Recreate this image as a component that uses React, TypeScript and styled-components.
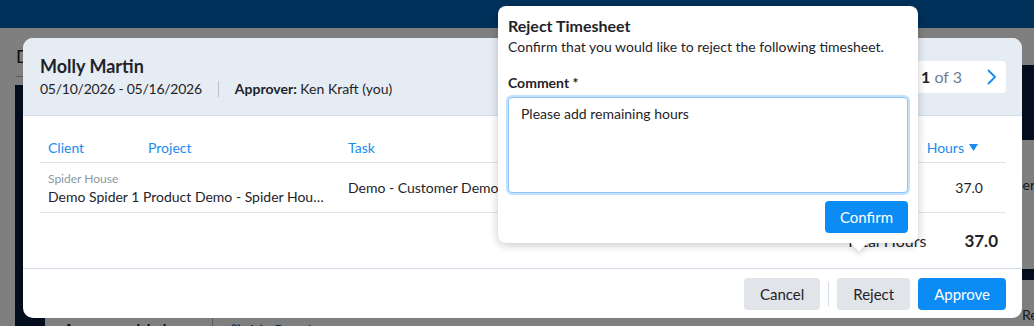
import { useEffect, useRef } from "react";
import styled, { createGlobalStyle } from "styled-components";
import { Users } from "lucide-react";

const GlobalStyle = createGlobalStyle`
  body {
    margin: 0;
    font-family: Lato, "Open Sans", Arial, sans-serif;
    color: #1f2329;
  }
  * {
    box-sizing: border-box;
  }
`;

const Screen = styled.div`
  position: relative;
  width: 1034px;
  height: 326px;
  overflow: hidden;
  background: #fff;
`;

// page under the modal backdrop
const TopBar = styled.div`
  height: 28px;
  background: #0062b6;
`;

const PageColumns = styled.div`
  display: flex;
  gap: 5px;
`;

const MainColumn = styled.div`
  flex: 1;
  padding-left: 15px;
`;

const PageTitle = styled.div`
  font-size: 18px;
  color: #222;
  line-height: 22px;
  margin: 17px 0 0 1px;
`;

const PageRule = styled.div`
  height: 1px;
  background: #bbb;
  margin: 9px 0 8px 1px;
`;

const DarkPanel = styled.div`
  height: 225px;
  background: #061a3a;
`;

const InboxBar = styled.div`
  display: flex;
  align-items: center;
  height: 40px;
  padding-left: 17px;
  border-left: 30px solid #061a3a;
`;

const InboxTitle = styled.div`
  font-size: 20px;
  color: #222;
  padding-right: 18px;
  margin-right: 16px;
  border-right: 1px solid #bbb;
`;

const InboxLink = styled.div`
  display: flex;
  align-items: center;
  gap: 6px;
  font-size: 15px;
  color: #0a4fa0;
`;

const SideColumn = styled.div`
  width: 49px;
  padding-top: 37px;
  display: flex;
  flex-direction: column;
`;

const SideCard = styled.div`
  height: 75px;
  background: #061a3a;
`;

const SideText = styled.div<{ top: number; left: number }>`
  font-size: 14px;
  color: #333;
  margin: ${(p) => p.top}px 0 0 ${(p) => p.left}px;
  white-space: nowrap;
`;

const SideBand = styled.div`
  height: 11px;
  background: #061a3a;
  margin-top: 76px;
`;

const Backdrop = styled.div`
  position: absolute;
  inset: 0;
  background: rgba(0, 0, 0, 0.5);
  display: flex;
  align-items: flex-start;
`;

// modal
const Modal = styled.div`
  width: 999px;
  height: 280px;
  margin: 38px 0 0 23px;
  background: #fff;
  border-radius: 10px;
  overflow: hidden;
  display: flex;
  flex-direction: column;
`;

const ModalHeader = styled.div`
  height: 78px;
  flex-shrink: 0;
  background: #e5ecf3;
  border-bottom: 1px solid #d3dde7;
  display: flex;
  align-items: center;
  justify-content: space-between;
  padding: 0 16px 0 17px;
`;

const Person = styled.div`
  display: flex;
  flex-direction: column;
  gap: 3px;
`;

const Name = styled.div`
  font-size: 18px;
  font-weight: 700;
  line-height: 22px;
`;

const SubLine = styled.div`
  display: flex;
  align-items: center;
  font-size: 14px;
  line-height: 18px;
`;

const Dates = styled.span`
  letter-spacing: -0.25px;
`;

const VSep = styled.div`
  width: 1px;
  height: 16px;
  background: #b7c2cd;
  margin: 0 16px;
`;

const Strong = styled.span`
  font-weight: 700;
`;

const Pager = styled.div`
  width: 111px;
  height: 32px;
  background: #fff;
  border-radius: 4px;
  display: flex;
  align-items: center;
`;

const PagerBtn = styled.div<{ w: number }>`
  width: ${(p) => p.w}px;
  height: 32px;
  display: flex;
  align-items: center;
  justify-content: center;
  color: #1a8cf0;
`;

const PageCount = styled.div`
  font-size: 16px;
  color: #6d7f92;
  flex: 1;
  b {
    color: #1f2329;
  }
`;

const ModalBody = styled.div`
  flex: 1;
  padding: 16px 16px 0 17px;
`;

const Row = styled.div<{ h: number; line?: boolean }>`
  display: grid;
  grid-template-columns: 100px 200px 1fr 120px;
  align-items: center;
  height: ${(p) => p.h}px;
  border-bottom: ${(p) => (p.line ? "1px solid #dde4eb" : "none")};
`;

const HeadCell = styled.div<{ right?: boolean }>`
  font-size: 14px;
  color: #1a8cf0;
  padding: ${(p) => (p.right ? "0 28px 0 8px" : "0 8px")};
  display: flex;
  align-items: center;
  justify-content: ${(p) => (p.right ? "flex-end" : "flex-start")};
  gap: 5px;
`;

const Cell = styled.div<{ right?: boolean }>`
  font-size: 14px;
  padding: ${(p) => (p.right ? "0 23px 0 8px" : "0 8px")};
  text-align: ${(p) => (p.right ? "right" : "left")};
  min-width: 0;
`;

const SpanCell = styled(Cell)`
  grid-column: span 2;
  display: flex;
  flex-direction: column;
  gap: 2px;
`;

const ClientName = styled.div`
  font-size: 12px;
  color: #8c98a4;
`;

const Ellipsis = styled.div`
  white-space: nowrap;
  overflow: hidden;
  text-overflow: ellipsis;
  padding-right: 7px;
`;

const TotalRow = styled.div`
  height: 55px;
  display: flex;
  align-items: center;
  justify-content: flex-end;
  gap: 38px;
  padding-right: 8px;
`;

const TotalLabel = styled.div`
  font-size: 16px;
`;

const TotalValue = styled.div`
  font-size: 17px;
  font-weight: 700;
`;

const ModalFooter = styled.div`
  height: 50px;
  flex-shrink: 0;
  border-top: 1px solid #d3dde7;
  display: flex;
  align-items: center;
  justify-content: flex-end;
  gap: 8px;
  padding-right: 16px;
`;

const Button = styled.button<{ primary?: boolean; pad?: number }>`
  height: 32px;
  padding: 0 ${(p) => p.pad ?? 16}px;
  border: none;
  border-radius: 4px;
  font-family: inherit;
  font-size: 15px;
  background: ${(p) => (p.primary ? "#0b8cf5" : "#e1e4e8")};
  color: ${(p) => (p.primary ? "#fff" : "#1f2329")};
`;

const FooterSep = styled.div`
  width: 1px;
  height: 24px;
  background: #d5dbe1;
`;

// reject popover
const Popover = styled.div`
  position: absolute;
  left: 498px;
  top: 6px;
  width: 420px;
  padding: 10px;
  background: #fff;
  border-radius: 8px;
  box-shadow: 0 2px 10px rgba(0, 0, 0, 0.22);
  display: flex;
  flex-direction: column;
  &::after {
    content: "";
    position: absolute;
    left: 355px;
    bottom: -6px;
    width: 12px;
    height: 12px;
    background: #fff;
    transform: rotate(45deg);
    box-shadow: 3px 3px 5px rgba(0, 0, 0, 0.1);
  }
`;

const PopTitle = styled.div`
  font-size: 16px;
  font-weight: 700;
  line-height: 20px;
`;

const PopText = styled.div`
  font-size: 14px;
  line-height: 18px;
  margin-top: 2px;
`;

const FieldLabel = styled.div`
  font-size: 14px;
  font-weight: 700;
  line-height: 18px;
  margin-top: 18px;
`;

const CommentBox = styled.textarea`
  margin-top: 5px;
  height: 96px;
  width: 100%;
  resize: none;
  border: 1px solid #8fc5f5;
  border-radius: 4px;
  box-shadow: 0 0 0 2px #c4e2fd;
  outline: none;
  padding: 7px 12px;
  font-family: inherit;
  font-size: 14px;
  line-height: 18px;
  color: #1f2329;
`;

const PopActions = styled.div`
  display: flex;
  justify-content: flex-end;
  margin-top: 8px;
`;

const Chevron = () => (
  <svg width="10" height="16" viewBox="0 0 10 16">
    <polyline
      points="1.5,1.5 8,8 1.5,14.5"
      fill="none"
      stroke="currentColor"
      strokeWidth="1.8"
      strokeLinecap="round"
      strokeLinejoin="round"
    />
  </svg>
);

const SortArrow = () => (
  <svg width="9" height="7" viewBox="0 0 9 7">
    <polygon points="0,0 9,0 4.5,7" fill="currentColor" />
  </svg>
);

const App = () => {
  const commentRef = useRef<HTMLTextAreaElement>(null);

  useEffect(() => {
    const el = commentRef.current;
    if (el) {
      el.focus();
      el.setSelectionRange(el.value.length, el.value.length);
    }
  }, []);

  return (
    <Screen>
      <GlobalStyle />
      <TopBar />
      <PageColumns>
        <MainColumn>
          <PageTitle>Dashboard</PageTitle>
          <PageRule />
          <DarkPanel />
          <InboxBar>
            <InboxTitle>Approval Inbox</InboxTitle>
            <InboxLink>
              <Users size={14} />
              My People
            </InboxLink>
          </InboxBar>
        </MainColumn>
        <SideColumn>
          <SideCard />
          <SideText top={36} left={-2}>
            Member
          </SideText>
          <SideBand />
          <SideText top={26} left={37}>
            Recent
          </SideText>
        </SideColumn>
      </PageColumns>

      <Backdrop>
        <Modal>
          <ModalHeader>
            <Person>
              <Name>Molly Martin</Name>
              <SubLine>
                <Dates>05/10/2026 - 05/16/2026</Dates>
                <VSep />
                <Strong>Approver:</Strong>&nbsp;Ken Kraft (you)
              </SubLine>
            </Person>
            <Pager>
              <PagerBtn w={26} />
              <PageCount>
                <b>1</b> of 3
              </PageCount>
              <PagerBtn w={28}>
                <Chevron />
              </PagerBtn>
            </Pager>
          </ModalHeader>
          <ModalBody>
            <Row h={31} line>
              <HeadCell>Client</HeadCell>
              <HeadCell>Project</HeadCell>
              <HeadCell>Task</HeadCell>
              <HeadCell right>
                Hours
                <SortArrow />
              </HeadCell>
            </Row>
            <Row h={50} line>
              <SpanCell>
                <ClientName>Spider House</ClientName>
                <Ellipsis>
                  Demo Spider 1 Product Demo - Spider House Internal
                </Ellipsis>
              </SpanCell>
              <Cell>Demo - Customer Demo</Cell>
              <Cell right>37.0</Cell>
            </Row>
            <TotalRow>
              <TotalLabel>Total Hours</TotalLabel>
              <TotalValue>37.0</TotalValue>
            </TotalRow>
          </ModalBody>
          <ModalFooter>
            <Button>Cancel</Button>
            <FooterSep />
            <Button>Reject</Button>
            <Button primary>Approve</Button>
          </ModalFooter>
        </Modal>
      </Backdrop>

      <Popover>
        <PopTitle>Reject Timesheet</PopTitle>
        <PopText>
          Confirm that you would like to reject the following timesheet.
        </PopText>
        <FieldLabel>Comment *</FieldLabel>
        <CommentBox ref={commentRef} defaultValue="Please add remaining hours" />
        <PopActions>
          <Button primary pad={15}>
            Confirm
          </Button>
        </PopActions>
      </Popover>
    </Screen>
  );
};

export default App;
